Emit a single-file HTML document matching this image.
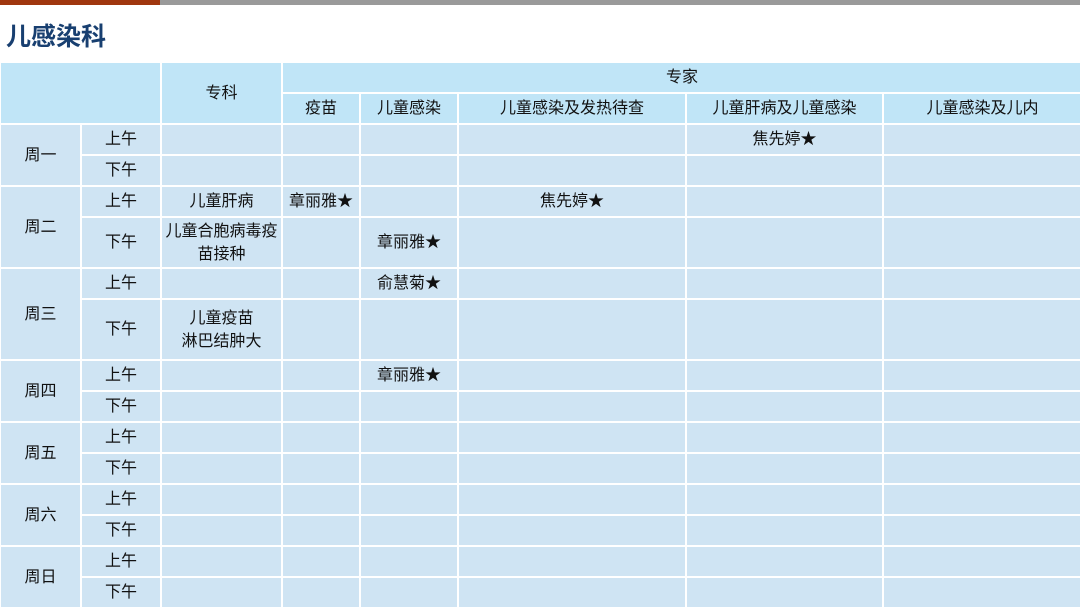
<!DOCTYPE html>
<html><head><meta charset="utf-8"><style>
body{margin:0;width:1080px;height:609px;overflow:hidden;background:#fff;font-family:"Liberation Sans","Noto Sans CJK SC",sans-serif;}
.bar1{position:absolute;left:0;top:0;width:160px;height:5px;background:#a0370f;}
.bar2{position:absolute;left:160px;top:0;width:920px;height:5px;background:#9a9a9a;}
.title{position:absolute;left:6px;top:17px;font-size:25px;font-weight:bold;color:#183f70;}
table{position:absolute;left:-1px;top:61px;border-collapse:collapse;table-layout:fixed;width:1082px;}
td{border:2px solid #fff;padding:0;text-align:center;vertical-align:middle;font-size:16px;color:#111;background:#cfe4f3;line-height:23px;}
tr.h td{background:#c0e5f7;}
</style></head><body>
<div class="bar1"></div><div class="bar2"></div>
<div class="title">儿感染科</div>
<table>
<colgroup><col style="width:81px"><col style="width:80px"><col style="width:121px"><col style="width:78px"><col style="width:98px"><col style="width:228px"><col style="width:197px"><col style="width:199px"></colgroup>
<tr class="h" style="height:31px"><td colspan="2" rowspan="2"></td><td rowspan="2">专科</td><td colspan="5">专家</td></tr>
<tr class="h" style="height:31px"><td>疫苗</td><td>儿童感染</td><td>儿童感染及发热待查</td><td>儿童肝病及儿童感染</td><td>儿童感染及儿内</td></tr>
<tr style="height:31px"><td rowspan="2">周一</td><td>上午</td><td></td><td></td><td></td><td></td><td>焦先婷★</td><td></td></tr>
<tr style="height:31px"><td>下午</td><td></td><td></td><td></td><td></td><td></td><td></td></tr>
<tr style="height:31px"><td rowspan="2">周二</td><td>上午</td><td>儿童肝病</td><td>章丽雅★</td><td></td><td>焦先婷★</td><td></td><td></td></tr>
<tr style="height:51px"><td>下午</td><td>儿童合胞病毒疫<br>苗接种</td><td></td><td>章丽雅★</td><td></td><td></td><td></td></tr>
<tr style="height:31px"><td rowspan="2">周三</td><td>上午</td><td></td><td></td><td>俞慧菊★</td><td></td><td></td><td></td></tr>
<tr style="height:61px"><td>下午</td><td>儿童疫苗<br>淋巴结肿大</td><td></td><td></td><td></td><td></td><td></td></tr>
<tr style="height:31px"><td rowspan="2">周四</td><td>上午</td><td></td><td></td><td>章丽雅★</td><td></td><td></td><td></td></tr>
<tr style="height:31px"><td>下午</td><td></td><td></td><td></td><td></td><td></td><td></td></tr>
<tr style="height:31px"><td rowspan="2">周五</td><td>上午</td><td></td><td></td><td></td><td></td><td></td><td></td></tr>
<tr style="height:31px"><td>下午</td><td></td><td></td><td></td><td></td><td></td><td></td></tr>
<tr style="height:31px"><td rowspan="2">周六</td><td>上午</td><td></td><td></td><td></td><td></td><td></td><td></td></tr>
<tr style="height:31px"><td>下午</td><td></td><td></td><td></td><td></td><td></td><td></td></tr>
<tr style="height:31px"><td rowspan="2">周日</td><td>上午</td><td></td><td></td><td></td><td></td><td></td><td></td></tr>
<tr style="height:31px"><td>下午</td><td></td><td></td><td></td><td></td><td></td><td></td></tr>
</table>
</body></html>
